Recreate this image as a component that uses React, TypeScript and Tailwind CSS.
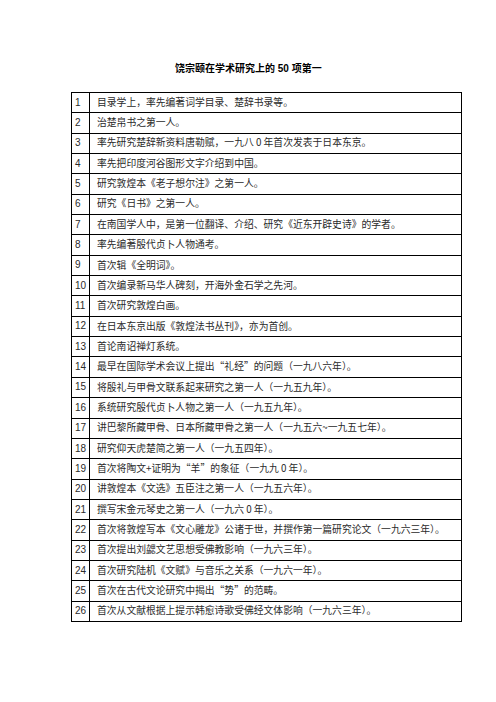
const rows: string[] = [
  "目录学上，率先编著词学目录、楚辞书录等。",
  "治楚帛书之第一人。",
  "率先研究楚辞新资料唐勒赋，一九八 0 年首次发表于日本东京。",
  "率先把印度河谷图形文字介绍到中国。",
  "研究敦煌本《老子想尔注》之第一人。",
  "研究《日书》之第一人。",
  "在南国学人中，是第一位翻译、介绍、研究《近东开辟史诗》的学者。",
  "率先编著殷代贞卜人物通考。",
  "首次辑《全明词》。",
  "首次编录新马华人碑刻，开海外金石学之先河。",
  "首次研究敦煌白画。",
  "在日本东京出版《敦煌法书丛刊》，亦为首创。",
  "首论南诏禅灯系统。",
  "最早在国际学术会议上提出“礼经”的问题（一九八六年）。",
  "将殷礼与甲骨文联系起来研究之第一人（一九五九年）。",
  "系统研究殷代贞卜人物之第一人（一九五九年）。",
  "讲巴黎所藏甲骨、日本所藏甲骨之第一人（一九五六~一九五七年）。",
  "研究仰天虎楚简之第一人（一九五四年）。",
  "首次将陶文+证明为“羊”的象征（一九九 0 年）。",
  "讲敦煌本《文选》五臣注之第一人（一九五六年）。",
  "撰写宋金元琴史之第一人（一九六 0 年）。",
  "首次将敦煌写本《文心雕龙》公诸于世，并撰作第一篇研究论文（一九六三年）。",
  "首次提出刘勰文艺思想受佛教影响（一九六三年）。",
  "首次研究陆机《文赋》与音乐之关系（一九六一年）。",
  "首次在古代文论研究中揭出“势”的范畴。",
  "首次从文献根据上提示韩愈诗歌受佛经文体影响（一九六三年）。",
];

export default function App() {
  return (
    <div className="w-[496px] h-[702px] bg-white font-['Liberation_Sans','Noto_Sans_CJK_SC',sans-serif] text-[#2a2a2a]">
      {/* Title */}
      <div className="pt-[62px] pl-[175px] h-[92px]">
        <h1 className="text-[10px] leading-[14px] font-bold text-black whitespace-nowrap">
          饶宗颐在学术研究上的 50 项第一
        </h1>
      </div>

      {/* Table */}
      <div className="ml-[71px] w-[391px] border-t border-l border-black">
        {rows.map((text, i) => (
          <div key={i} className="flex h-[20.35px] border-b border-r border-black">
            <div className="w-[18px] shrink-0 border-r border-black pl-[3px] flex items-center text-[10px] leading-none">
              {i + 1}
            </div>
            <div className="pl-[7px] flex items-center text-[9.8px] leading-none whitespace-nowrap font-['Noto_Sans_CJK_SC',sans-serif]">
              {text}
            </div>
          </div>
        ))}
      </div>
    </div>
  );
}
